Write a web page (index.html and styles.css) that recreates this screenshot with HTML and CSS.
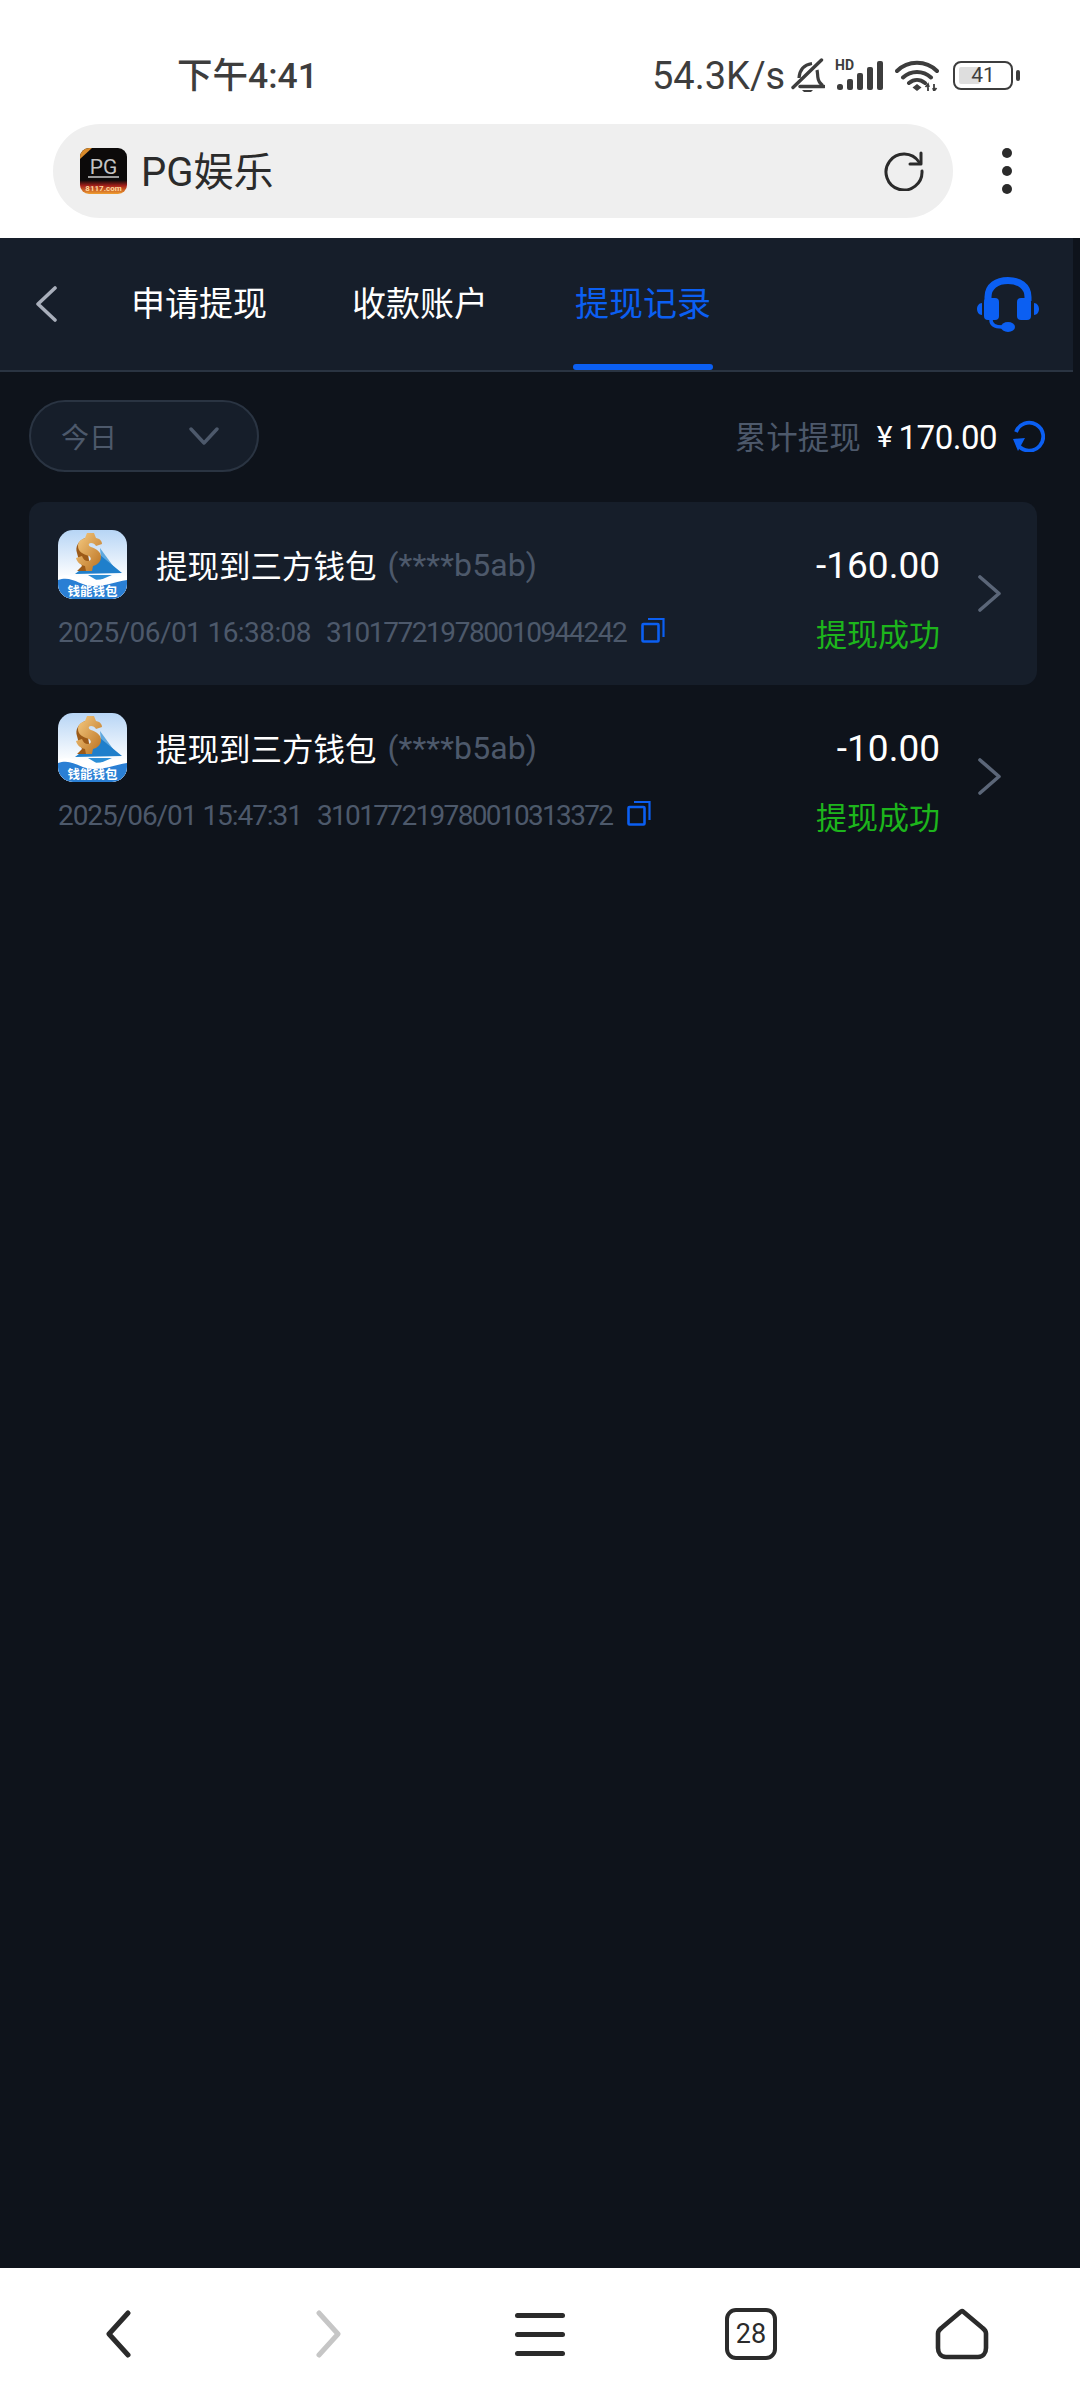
FILE: index.html
```html
<!DOCTYPE html>
<html lang="zh-CN">
<head>
<meta charset="utf-8">
<title>PG娱乐</title>
<link rel="stylesheet" href="styles.css">
</head>
<body>
<div class="phone">
  <header class="chrome">
    <div class="status">
      <span class="time">下午4:41</span>
      <div class="status-right">
        <span class="speed">54.3K/s</span>
        <svg class="ic-bell" viewBox="0 0 34 34"><path d="M8 20c.5-7 3-13 13-14.500M26 12c.5 2 .5 4 .8 7 .3 3 1.500 6 5 8.500" fill="none" stroke="#3d3d3d" stroke-width="3.200"/><path d="M9 28.500h24" stroke="#3d3d3d" stroke-width="3.400" stroke-linecap="round"/><path d="M2 29.500 30.500 2" stroke="#3d3d3d" stroke-width="3.400" stroke-linecap="round"/><path d="M11 32h11l-2.500 2.500h-6z" fill="#3d3d3d"/></svg>
        <svg class="ic-signal" viewBox="0 -4 48 34"><text x="0" y="10" class="hd">HD</text><rect x="2" y="24" width="6" height="6" rx="2.500" fill="#3d3d3d"/><rect x="12" y="19" width="6" height="11" rx="2" fill="#3d3d3d"/><rect x="22" y="13" width="6" height="17" rx="2" fill="#3d3d3d"/><rect x="32" y="7" width="6" height="23" rx="2" fill="#3d3d3d"/><rect x="42" y="1" width="6" height="29" rx="2" fill="#3d3d3d"/></svg>
        <svg class="ic-wifi" viewBox="0 0 44 32"><path d="M2 12C13 1 31 1 42 12M8 18.500C16 11 28 11 36 18.500M14 24c5-4 11-4 16 0" fill="none" stroke="#3d3d3d" stroke-width="4" stroke-linecap="round"/><path d="m22 25 4.500 3.500L22 32l-4.500-3.500z" fill="#3d3d3d"/><path d="M33 25v7M39 25v7M30.500 28l2.500-3 1 3M41.500 29l-2.500 3-1-3" fill="none" stroke="#3d3d3d" stroke-width="1.800"/></svg>
        <div class="battery"><div class="battery-body"><div class="battery-fill"></div><span class="battery-num">41</span></div><div class="battery-nub"></div></div>
      </div>
    </div>
    <div class="urlrow">
      <div class="urlbar">
        <svg class="favicon" viewBox="0 0 47 46"><defs><linearGradient id="pgb" x1="0" y1="0" x2="0" y2="1"><stop offset="0.7" stop-color="#0c0a0a"/><stop offset="0.82" stop-color="#a5201a"/><stop offset="1" stop-color="#f0a030"/></linearGradient><clipPath id="pgc"><rect width="47" height="46" rx="9"/></clipPath></defs><g clip-path="url(#pgc)"><rect width="47" height="46" fill="url(#pgb)"/><path d="M0 0h12L0 11z" fill="#d98a2a"/><text x="23.500" y="26" class="pg">PG</text><rect x="8" y="28" width="31" height="2" fill="#9a9a9a"/><text x="23.500" y="43" class="pg-url">8117.com</text></g></svg>
        <span class="sitename">PG娱乐</span>
        <svg class="reload" viewBox="0 0 40 40"><path d="M35 11A18 18 0 1 0 38 20" fill="none" stroke="#2b2b2b" stroke-width="3" stroke-linecap="round"/><path d="M26 13h11V2" fill="none" stroke="#2b2b2b" stroke-width="3" stroke-linecap="round" stroke-linejoin="round"/></svg>
      </div>
      <div class="dots"><i></i><i></i><i></i></div>
    </div>
  </header>

  <main class="page">
    <nav class="topnav">
      <svg class="back" viewBox="0 0 22 36"><path d="M20 2 3 18l17 16" fill="none" stroke="#a9afbb" stroke-width="3.600" stroke-linecap="round" stroke-linejoin="round"/></svg>
      <div class="tabs">
        <a class="tab">申请提现</a>
        <a class="tab">收款账户</a>
        <a class="tab tab-active">提现记录</a>
      </div>
      <svg class="headset" viewBox="0 0 62 55"><path d="M11 24V20C11 9 20 3.500 31 3.500S51 9 51 20v4" fill="none" stroke="#0b5ff2" stroke-width="7"/><rect x="7" y="21" width="15" height="22" rx="4" fill="#0b5ff2"/><rect x="40" y="21" width="14" height="22" rx="4" fill="#0b5ff2"/><path d="M5 26v12C2 38 0 35 0 32s2-6 5-6zM57 26v12c3 0 5-3 5-6s-2-6-5-6z" fill="#0b5ff2"/><path d="M14 43c0 5 4 7 11 7" fill="none" stroke="#0b5ff2" stroke-width="3.500"/><ellipse cx="31" cy="50" rx="7" ry="5" fill="#0b5ff2"/></svg>
    </nav>

    <section class="filterbar">
      <div class="pill"><span>今日</span><svg class="pill-chev" viewBox="0 0 30 19"><path d="M2 2l13 14L28 2" fill="none" stroke="#4d596b" stroke-width="3.400" stroke-linecap="round" stroke-linejoin="round"/></svg></div>
      <div class="total">
        <span class="total-label">累计提现</span>
        <span class="total-yen">¥</span>
        <span class="total-value">170.00</span>
        <svg class="total-refresh" viewBox="0 0 32 32"><path d="M3 12A14 14 0 1 1 5 25" fill="none" stroke="#0b5ff2" stroke-width="3.800"/><path d="M0 19l12-1-7 13z" fill="#0b5ff2"/></svg>
      </div>
    </section>

    <section class="records">
      <article class="record record-on">
        <div class="rec-left">
          <div class="rec-head">
            <svg class="wallet" viewBox="0 0 69 69"><defs><linearGradient id="wsky" x1="0" y1="0" x2="0" y2="1"><stop offset="0" stop-color="#b7d5f5"/><stop offset="0.7" stop-color="#ffffff"/></linearGradient><linearGradient id="wgold" x1="0" y1="0" x2="1" y2="1"><stop offset="0" stop-color="#f7cd84"/><stop offset="1" stop-color="#b96f1e"/></linearGradient><clipPath id="wclip"><rect width="69" height="69" rx="15"/></clipPath></defs><g clip-path="url(#wclip)"><rect width="69" height="69" fill="url(#wsky)"/><path d="M42 18 58 40H44z" fill="#5fa8de"/><path d="M17 44 42 25l22 18z" fill="#1f7fcb"/><path d="M30 45h24l-14 6z" fill="#2c8ed6"/><path d="M27 8c-7 3-10 9-8 15 1 5 3 9 5 13l-5 5h14z" fill="#9c5a18"/><path d="M29 3h7l2 5c5 1 6 4 6 6l-6 2c-1-2-3-3-5-3-3 0-3 3 0 4 6 2 10 5 10 10 0 5-4 8-8 9l-1 5h-6l-1-5c-5-1-8-4-9-8l6-2c1 3 3 5 6 5s4-3 1-5c-6-2-11-4-11-10 0-5 4-7 7-8z" fill="url(#wgold)"/><path d="M0 47c12-5 22 3 34 3s22-3 35-4v23H0z" fill="#ffffff"/><path d="M0 50c14-5 22 6 35 6s22-4 34-6v19H0z" fill="#2a7fd4"/><text x="34.500" y="66" class="wallet-text">钱能钱包</text></g></svg>
            <span class="rec-title">提现到三方钱包</span>
            <span class="rec-acct">(****b5ab)</span>
          </div>
          <div class="rec-meta">
            <span class="date-a">2025/06/01 16:38:08</span>
            <span class="id-a">310177219780010944242</span>
            <svg class="copy" viewBox="0 0 24 26"><rect x="1.500" y="7" width="16" height="17.500" rx="1" fill="none" stroke="#0b5ff2" stroke-width="2.600"/><path d="M7 2h15.500v18" fill="none" stroke="#0b5ff2" stroke-width="2.200"/></svg>
          </div>
        </div>
        <div class="rec-right">
          <div class="rec-amount">-160.00</div>
          <div class="rec-state">提现成功</div>
        </div>
        <svg class="rec-chev" viewBox="0 0 23 37"><path d="M2 2l19 16.500L2 35" fill="none" stroke="#5b6678" stroke-width="3.600" stroke-linecap="round" stroke-linejoin="round"/></svg>
      </article>

      <article class="record">
        <div class="rec-left">
          <div class="rec-head">
            <svg class="wallet" viewBox="0 0 69 69"><g clip-path="url(#wclip)"><rect width="69" height="69" fill="url(#wsky)"/><path d="M42 18 58 40H44z" fill="#5fa8de"/><path d="M17 44 42 25l22 18z" fill="#1f7fcb"/><path d="M30 45h24l-14 6z" fill="#2c8ed6"/><path d="M27 8c-7 3-10 9-8 15 1 5 3 9 5 13l-5 5h14z" fill="#9c5a18"/><path d="M29 3h7l2 5c5 1 6 4 6 6l-6 2c-1-2-3-3-5-3-3 0-3 3 0 4 6 2 10 5 10 10 0 5-4 8-8 9l-1 5h-6l-1-5c-5-1-8-4-9-8l6-2c1 3 3 5 6 5s4-3 1-5c-6-2-11-4-11-10 0-5 4-7 7-8z" fill="url(#wgold)"/><path d="M0 47c12-5 22 3 34 3s22-3 35-4v23H0z" fill="#ffffff"/><path d="M0 50c14-5 22 6 35 6s22-4 34-6v19H0z" fill="#2a7fd4"/><text x="34.500" y="66" class="wallet-text">钱能钱包</text></g></svg>
            <span class="rec-title">提现到三方钱包</span>
            <span class="rec-acct">(****b5ab)</span>
          </div>
          <div class="rec-meta">
            <span class="date-b">2025/06/01 15:47:31</span>
            <span class="id-b">310177219780010313372</span>
            <svg class="copy" viewBox="0 0 24 26"><rect x="1.500" y="7" width="16" height="17.500" rx="1" fill="none" stroke="#0b5ff2" stroke-width="2.600"/><path d="M7 2h15.500v18" fill="none" stroke="#0b5ff2" stroke-width="2.200"/></svg>
          </div>
        </div>
        <div class="rec-right">
          <div class="rec-amount">-10.00</div>
          <div class="rec-state">提现成功</div>
        </div>
        <svg class="rec-chev" viewBox="0 0 23 37"><path d="M2 2l19 16.500L2 35" fill="none" stroke="#5b6678" stroke-width="3.600" stroke-linecap="round" stroke-linejoin="round"/></svg>
      </article>
    </section>
  </main>

  <footer class="toolbar">
    <svg class="tb-chev" viewBox="0 0 26 48"><path d="M23 3 4 24l19 21" fill="none" stroke="#2b2b2b" stroke-width="5" stroke-linecap="round" stroke-linejoin="round"/></svg>
    <svg class="tb-chev" viewBox="0 0 26 48"><path d="M3 3l19 21L3 45" fill="none" stroke="#c6c6c6" stroke-width="5" stroke-linecap="round" stroke-linejoin="round"/></svg>
    <div class="tb-menu"><i></i><i></i><i></i></div>
    <div class="tb-tabs">28</div>
    <svg class="tb-home" viewBox="0 0 54 52"><path d="M26 3.500c.7-.5 1.500-.5 2 0l19 16c2.500 2 4 3 4 6V40c0 5-3 9-8 9H11c-5 0-8-4-8-9V25.500c0-3 1.500-4 4-6z" fill="none" stroke="#2b2b2b" stroke-width="4.600" stroke-linejoin="round"/></svg>
  </footer>
</div>
</body>
</html>
```

FILE: styles.css
```css
* { box-sizing: border-box; }
html, body { margin: 0; padding: 0; }
body {
  width: 1080px;
  height: 2400px;
  overflow: hidden;
  font-family: Roboto, "Noto Sans CJK SC", sans-serif;
  background: #0e131b;
}
.phone { display: flex; flex-direction: column; height: 2400px; }

/* browser chrome */
.chrome { background: #fff; height: 238px; flex: none; }
.status {
  height: 124px;
  padding: 0 60px 0 177px;
  display: flex;
  justify-content: space-between;
  align-items: flex-start;
  color: #3d3d3d;
}
.time { font-size: 35.500px; font-weight: 500; line-height: 50px; margin-top: 51px; }
.status-right { display: flex; align-items: center; height: 50px; margin-top: 50px; }
.speed { font-size: 38px; line-height: 50px; width: 139px; margin-top: 2px; }
.ic-bell { width: 34px; height: 34px; }
.ic-signal { width: 48px; height: 34px; margin-left: 10px; margin-top: -4px; }
.hd { font: 700 14px Roboto, sans-serif; fill: #3d3d3d; }
.ic-wifi { width: 44px; height: 32px; margin-left: 12px; }
.battery { display: flex; align-items: center; margin-left: 14px; }
.battery-body {
  width: 60px;
  height: 29px;
  border: 2.500px solid #3d3d3d;
  border-radius: 8px;
  position: relative;
  display: flex;
  align-items: center;
  justify-content: center;
}
.battery-fill { position: absolute; left: 4px; top: 4px; bottom: 4px; width: 21px; background: #dedede; border-radius: 2px; }
.battery-num { position: relative; font-size: 21px; line-height: 24px; color: #3d3d3d; }
.battery-nub { width: 4px; height: 11px; margin-left: 3px; background: #3d3d3d; border-radius: 2px; }

.urlrow { display: flex; align-items: center; height: 94px; padding-left: 53px; }
.urlbar {
  width: 900px;
  height: 94px;
  border-radius: 47px;
  background: #efefef;
  display: flex;
  align-items: center;
  padding: 0 29px 0 27px;
}
.favicon { width: 47px; height: 46px; flex: none; }
.sitename { font-size: 40px; line-height: 50px; color: #2b2b2b; margin-left: 14px; margin-top: 3px; flex: 1; }
.reload { width: 40px; height: 40px; flex: none; }
.pg { font: 400 21px Roboto, sans-serif; fill: #c4c4c4; text-anchor: middle; }
.pg-url { font: 700 8px Roboto, sans-serif; fill: #ffd9a0; text-anchor: middle; }
.dots { display: flex; flex-direction: column; gap: 8px; margin-left: 49px; }
.dots i { display: block; width: 10px; height: 10px; border-radius: 50%; background: #2b2b2b; }

/* page */
.page { flex: 1; background: #0e131b; min-height: 0; }
.topnav {
  width: 1073px;
  height: 134px;
  background: #161e2a;
  border-bottom: 2px solid #2a3442;
  display: flex;
  align-items: center;
  padding: 0 34px 0 35px;
}
.back { width: 22px; height: 36px; flex: none; }
.tabs { display: flex; gap: 86px; margin-left: 74px; align-self: stretch; }
.tab {
  position: relative;
  font-size: 34px;
  line-height: 132px;
  color: #fff;
}
.tab:nth-child(2) { margin-left: -1px; margin-right: 1px; }
.tab-active { color: #0b5ff2; }
.tab-active::after {
  content: "";
  position: absolute;
  left: -2px;
  right: -2px;
  bottom: 0;
  height: 6px;
  border-radius: 3px;
  background: #0b5ff2;
}
.headset { width: 62px; height: 55px; margin-left: auto; flex: none; }

.filterbar {
  display: flex;
  justify-content: space-between;
  align-items: center;
  padding: 28px 35px 30px 29px;
}
.pill {
  width: 230px;
  height: 72px;
  border: 2px solid #2a3442;
  border-radius: 36px;
  background: #161e2a;
  display: flex;
  align-items: center;
  padding: 0 38px 0 30px;
  justify-content: space-between;
  font-size: 28px;
  color: #4d596b;
}
.pill-chev { width: 30px; height: 19px; }
.total { display: flex; align-items: center; }
.total-label { font-size: 31.500px; color: #4d596b; margin-top: -2px; }
.total-yen { font-size: 30px; color: #fff; margin-left: 16px; }
.total-value { font-size: 33px; letter-spacing: -.5px; color: #fff; margin-left: 6px; margin-top: 2px; }
.total-refresh { width: 32px; height: 32px; margin-left: 16px; }

.records { display: flex; flex-direction: column; }
.record {
  width: 1008px;
  height: 183px;
  margin-left: 29px;
  padding: 28px 36px 0 29px;
  border-radius: 14px;
  display: flex;
  align-items: flex-start;
}
.record-on { background: #161e2a; }
.rec-left { flex: 1; min-width: 0; }
.rec-head { display: flex; align-items: center; height: 69px; }
.wallet { width: 69px; height: 69px; flex: none; }
.wallet-text { font: 700 12.500px "Noto Sans CJK SC", sans-serif; fill: #fff; text-anchor: middle; }
.rec-title { font-size: 31.500px; color: #fff; margin-left: 29px; margin-bottom: 2px; }
.rec-acct { font-size: 32px; letter-spacing: .1px; color: #4d596b; margin-left: 11px; }
.rec-meta {
  display: flex;
  align-items: center;
  gap: 15px;
  height: 36px;
  margin-top: 15px;
  font-size: 28px;
  color: #4d596b;
}
.date-a { letter-spacing: -.58px; }
.date-b { letter-spacing: -1.05px; }
.id-a { letter-spacing: -1.43px; }
.id-b { letter-spacing: -1.67px; }
.copy { width: 24px; height: 26px; margin-top: -4px; }
.rec-right { text-align: right; }
.rec-amount { font-size: 37px; line-height: 71px; color: #fff; }
.rec-state { font-size: 31px; line-height: 43px; margin-top: 13px; color: #1db51c; }
.rec-chev { width: 23px; height: 37px; margin-left: 38px; align-self: center; margin-top: -28px; flex: none; }

/* toolbar */
.toolbar {
  height: 132px;
  flex: none;
  background: #fff;
  display: grid;
  grid-template-columns: repeat(5, 211px);
  justify-content: center;
  justify-items: center;
  align-items: center;
}
.tb-chev { width: 26px; height: 48px; }
.tb-menu { display: flex; flex-direction: column; gap: 14px; width: 50px; }
.tb-menu i { display: block; height: 5px; border-radius: 3px; background: #2b2b2b; }
.tb-tabs {
  width: 52px;
  height: 52px;
  border: 4.500px solid #2b2b2b;
  border-radius: 11px;
  display: flex;
  align-items: center;
  justify-content: center;
  font-size: 27px;
  color: #2b2b2b;
}
.tb-home { width: 54px; height: 52px; }
```
